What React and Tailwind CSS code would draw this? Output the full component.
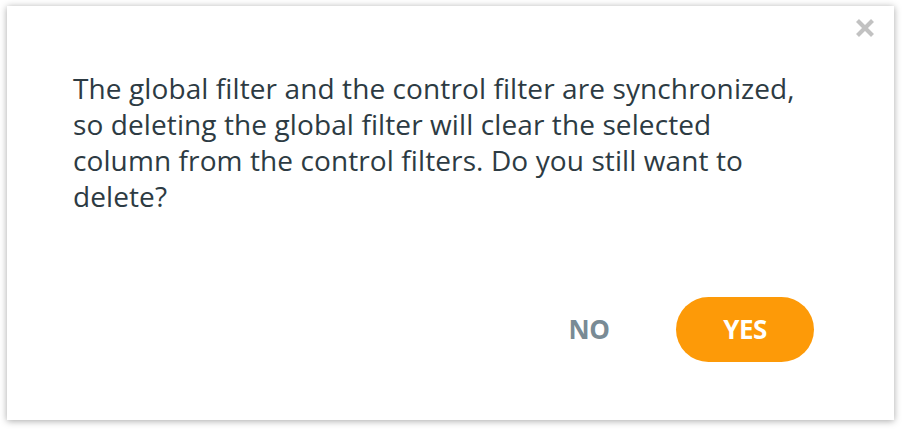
import { useState } from 'react'

function CloseIcon() {
  return (
    <svg viewBox="0 0 20 20" className="w-[20px] h-[20px]" fill="none">
      <path d="M2.5 2.5 L17.5 17.5 M17.5 2.5 L2.5 17.5" stroke="#c2c2c2" strokeWidth="4.2" />
    </svg>
  )
}

export default function App() {
  const [open, setOpen] = useState(true)

  return (
    <div className="w-[904px] h-[434px] bg-white flex items-start justify-start pl-[7px] pt-[6px] font-['Open_Sans',sans-serif]">
      {open && (
        <div className="relative w-[887px] h-[414px] bg-white shadow-[0_1px_7px_rgba(0,0,0,0.35)] flex flex-col px-[66px] pt-[64px] pb-[58px]">
          {/* Fermer */}
          <button
            onClick={() => setOpen(false)}
            className="absolute top-[12px] right-[19px] w-[20px] h-[20px] flex items-center justify-center"
          >
            <CloseIcon />
          </button>

          {/* Message */}
          <p className="text-[28px] leading-[36px] text-[#2d3b43] tracking-[0.1px]">
            The global filter and the control filter are synchronized,<br />
            so deleting the global filter will clear the selected<br />
            column from the control filters. Do you still want to<br />
            delete?
          </p>

          {/* Actions */}
          <div className="mt-auto flex items-center justify-end gap-[18px] pr-[14px]">
            <button className="w-[138px] h-[65px] rounded-full text-[26px] font-bold text-[#798b95] tracking-[-0.5px]">
              NO
            </button>
            <button className="w-[138px] h-[65px] rounded-full bg-[#fd9a08] text-[26px] font-bold text-white tracking-[-0.5px]">
              YES
            </button>
          </div>
        </div>
      )}
    </div>
  )
}
